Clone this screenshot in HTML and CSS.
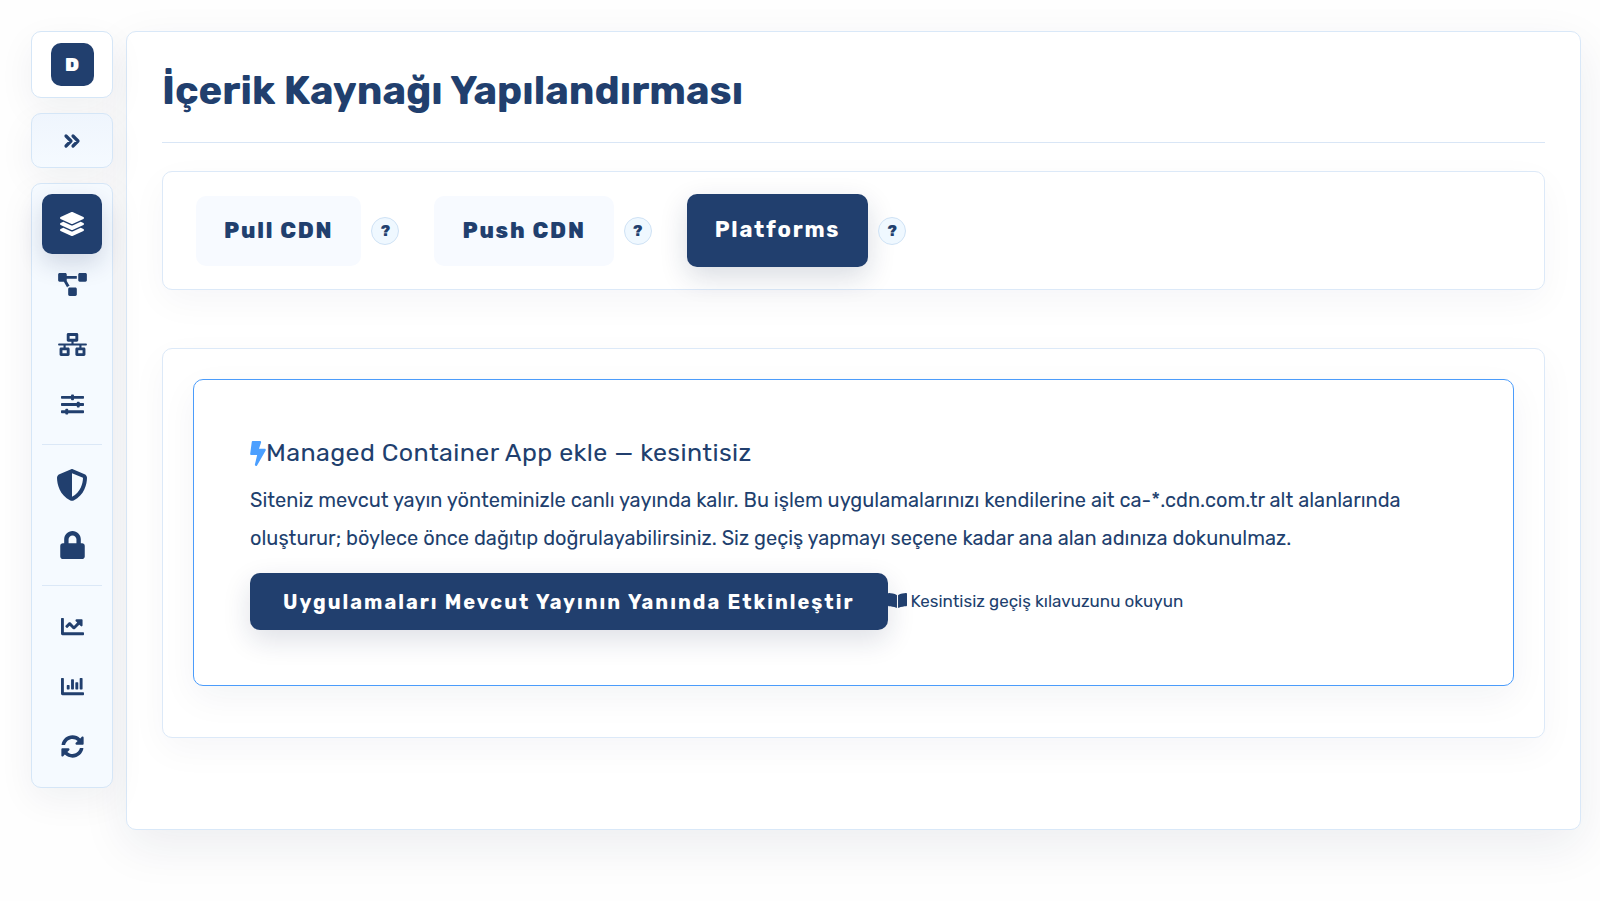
FILE: index.html
```html
<!DOCTYPE html>
<html lang="tr">
<head>
<meta charset="utf-8">
<meta name="viewport" content="width=device-width, initial-scale=1">
<title>İçerik Kaynağı Yapılandırması</title>
<link rel="stylesheet" href="styles.css">
</head>
<body>
<div class="layout">
  <aside class="sidebar">
    <div class="side-card brand"><a class="brand-mark" href="#">D</a></div>
    <button class="side-card expand" type="button" aria-label="Menüyü genişlet">
      <svg width="18" height="16" viewBox="0 0 18 16" aria-hidden="true"><path d="M3 3l5 5-5 5M10 3l5 5-5 5" fill="none" stroke="currentColor" stroke-width="3.2" stroke-linecap="round" stroke-linejoin="round"/></svg>
    </button>
    <nav class="side-card nav" aria-label="Ana menü">
      <a class="nav-item active" href="#" aria-label="Kaynaklar"><svg width="24" height="24" viewBox="0 0 512 512"><path d="M12.41 148.02l232.94 105.67c6.8 3.09 14.49 3.09 21.29 0l232.94-105.67c16.55-7.51 16.55-32.52 0-40.03L266.65 2.31a25.607 25.607 0 0 0-21.29 0L12.41 107.98c-16.55 7.51-16.55 32.53 0 40.04zm487.18 88.28l-58.09-26.33-161.64 73.27c-7.56 3.43-15.59 5.17-23.86 5.17s-16.29-1.74-23.86-5.17L70.51 209.97l-58.1 26.33c-16.55 7.5-16.55 32.5 0 40l232.94 105.59c6.8 3.08 14.49 3.08 21.29 0L499.59 276.3c16.55-7.5 16.55-32.5 0-40zm0 127.8l-57.87-26.23-161.86 73.37c-7.56 3.43-15.59 5.17-23.86 5.17s-16.29-1.74-23.86-5.17L70.29 337.87 12.41 364.1c-16.55 7.5-16.55 32.5 0 40l232.94 105.59c6.8 3.08 14.49 3.08 21.29 0L499.59 404.1c16.55-7.5 16.55-32.5 0-40z"/></svg></a>
      <a class="nav-item" href="#" aria-label="Akış"><svg width="29" height="23" viewBox="0 0 640 512"><path d="M384 320H256c-17.67 0-32 14.33-32 32v128c0 17.67 14.33 32 32 32h128c17.67 0 32-14.33 32-32V352c0-17.67-14.33-32-32-32zM192 32c0-17.67-14.33-32-32-32H32C14.33 0 0 14.33 0 32v128c0 17.67 14.33 32 32 32h95.72l73.16 128.04C211.98 300.98 232.4 288 256 288h.28L192 175.51V128h224V64H192V32zM608 0H480c-17.67 0-32 14.33-32 32v128c0 17.67 14.33 32 32 32h128c17.67 0 32-14.33 32-32V32c0-17.67-14.33-32-32-32z"/></svg></a>
      <a class="nav-item" href="#" aria-label="Ağ"><svg width="29" height="23" viewBox="0 0 640 512"><path d="M640 264v-16c0-8.84-7.16-16-16-16H344v-40h72c17.67 0 32-14.33 32-32V32c0-17.67-14.33-32-32-32H224c-17.67 0-32 14.33-32 32v128c0 17.67 14.33 32 32 32h72v40H16c-8.84 0-16 7.16-16 16v16c0 8.84 7.16 16 16 16h104v40H64c-17.67 0-32 14.33-32 32v128c0 17.67 14.33 32 32 32h160c17.67 0 32-14.33 32-32V352c0-17.67-14.33-32-32-32h-56v-40h304v40h-56c-17.67 0-32 14.33-32 32v128c0 17.67 14.33 32 32 32h160c17.67 0 32-14.33 32-32V352c0-17.67-14.33-32-32-32h-56v-40h104c8.84 0 16-7.16 16-16zM256 128V64h128v64H256zm-64 320H96v-64h96v64zm352 0h-96v-64h96v64z"/></svg></a>
      <a class="nav-item" href="#" aria-label="Ayarlar"><svg width="23" height="23" viewBox="0 0 512 512"><path d="M496 384H160v-16c0-8.8-7.2-16-16-16h-32c-8.8 0-16 7.2-16 16v16H16c-8.8 0-16 7.2-16 16v32c0 8.8 7.2 16 16 16h80v16c0 8.8 7.2 16 16 16h32c8.8 0 16-7.2 16-16v-16h336c8.8 0 16-7.2 16-16v-32c0-8.8-7.2-16-16-16zm0-160h-80v-16c0-8.8-7.2-16-16-16h-32c-8.8 0-16 7.2-16 16v16H16c-8.8 0-16 7.2-16 16v32c0 8.8 7.2 16 16 16h336v16c0 8.8 7.2 16 16 16h32c8.8 0 16-7.2 16-16v-16h80c8.8 0 16-7.2 16-16v-32c0-8.8-7.2-16-16-16zm0-160H288V48c0-8.8-7.2-16-16-16h-32c-8.8 0-16 7.2-16 16v16H16C7.2 64 0 71.2 0 80v32c0 8.8 7.2 16 16 16h208v16c0 8.8 7.2 16 16 16h32c8.8 0 16-7.2 16-16v-16h208c8.8 0 16-7.2 16-16V80c0-8.8-7.2-16-16-16z"/></svg></a>
      <hr class="nav-rule">
      <a class="nav-item" href="#" aria-label="Güvenlik"><svg width="32" height="32" viewBox="0 0 512 512"><path d="M256 0c4.6 0 9.2 1 13.4 2.9L457.7 82.8c22 9.3 38.4 31 38.3 57.2c-.5 99.2-41.3 280.7-213.6 363.2c-16.7 8-36.1 8-52.8 0C57.3 420.7 16.5 239.2 16 140c-.1-26.2 16.3-47.9 38.3-57.2L242.7 2.9C246.8 1 251.4 0 256 0zm0 66.8V444.8C394 378 431.1 230.1 432 141.4L256 66.8z"/></svg></a>
      <a class="nav-item" href="#" aria-label="SSL"><svg width="25" height="28" viewBox="0 0 448 512"><path d="M400 224h-24v-72C376 68.2 307.8 0 224 0S72 68.2 72 152v72H48c-26.5 0-48 21.5-48 48v192c0 26.5 21.5 48 48 48h352c26.5 0 48-21.5 48-48V272c0-26.5-21.5-48-48-48zm-104 0H152v-72c0-39.7 32.3-72 72-72s72 32.3 72 72v72z"/></svg></a>
      <hr class="nav-rule">
      <a class="nav-item" href="#" aria-label="Analiz"><svg width="23" height="23" viewBox="0 0 512 512"><path d="M496 384H64V80c0-8.84-7.16-16-16-16H16C7.16 64 0 71.16 0 80v336c0 17.67 14.33 32 32 32h464c8.84 0 16-7.16 16-16v-32c0-8.84-7.16-16-16-16zM464 96H345.94c-21.38 0-32.09 25.85-16.97 40.97l32.4 32.4L288 242.75l-73.37-73.37c-12.5-12.5-32.76-12.5-45.25 0l-68.69 68.69c-6.25 6.25-6.25 16.38 0 22.63l22.62 22.62c6.25 6.25 16.38 6.25 22.63 0L192 237.25l73.37 73.37c12.5 12.5 32.76 12.5 45.25 0l96-96 32.4 32.4c15.12 15.12 40.97 4.41 40.97-16.97V112c.01-8.84-7.15-16-15.99-16z"/></svg></a>
      <a class="nav-item" href="#" aria-label="Raporlar"><svg width="23" height="23" viewBox="0 0 512 512"><path d="M332.8 320h38.4c6.4 0 12.8-6.4 12.8-12.8V172.8c0-6.4-6.4-12.8-12.8-12.8h-38.4c-6.4 0-12.8 6.4-12.8 12.8v134.4c0 6.4 6.4 12.8 12.8 12.8zm96 0h38.4c6.4 0 12.8-6.4 12.8-12.8V76.8c0-6.4-6.4-12.8-12.8-12.8h-38.4c-6.4 0-12.8 6.4-12.8 12.8v230.4c0 6.4 6.4 12.8 12.8 12.8zm-288 0h38.4c6.4 0 12.8-6.4 12.8-12.8v-70.4c0-6.4-6.4-12.8-12.8-12.8h-38.4c-6.4 0-12.8 6.4-12.8 12.8v70.4c0 6.4 6.4 12.8 12.8 12.8zm96 0h38.4c6.4 0 12.8-6.4 12.8-12.8V108.8c0-6.4-6.4-12.8-12.8-12.8h-38.4c-6.4 0-12.8 6.4-12.8 12.8v198.4c0 6.4 6.4 12.8 12.8 12.8zM496 384H64V80c0-8.84-7.16-16-16-16H16C7.16 64 0 71.16 0 80v336c0 17.67 14.33 32 32 32h464c8.84 0 16-7.16 16-16v-32c0-8.84-7.16-16-16-16z"/></svg></a>
      <a class="nav-item" href="#" aria-label="Yenile"><svg width="23" height="23" viewBox="0 0 512 512"><path d="M370.72 133.28C339.458 104.008 298.888 87.962 255.848 88c-77.458.068-144.328 53.178-162.791 126.85-1.344 5.363-6.122 9.15-11.651 9.15H24.103c-7.498 0-13.194-6.807-11.807-14.176C33.933 94.924 134.813 8 256 8c66.448 0 126.791 26.136 171.315 68.685L463.03 40.97C478.149 25.851 504 36.559 504 57.941V192c0 13.255-10.745 24-24 24H345.941c-21.382 0-32.09-25.851-16.971-40.971l41.75-41.749zM32 296h134.059c21.382 0 32.09 25.851 16.971 40.971l-41.75 41.75c31.262 29.273 71.835 45.319 114.876 45.28 77.418-.07 144.315-53.144 162.787-126.849 1.344-5.363 6.122-9.15 11.651-9.15h57.304c7.498 0 13.194 6.807 11.807 14.176C478.067 417.076 377.187 504 256 504c-66.448 0-126.791-26.136-171.315-68.685L48.97 471.03C33.851 486.149 8 475.441 8 454.059V320c0-13.255 10.745-24 24-24z"/></svg></a>
    </nav>
  </aside>

  <main class="main">
    <h1 class="title">İçerik Kaynağı Yapılandırması</h1>
    <div class="card tabs">
      <div class="tab-group"><button class="tab" type="button">Pull CDN</button><button class="help" type="button">?</button></div>
      <div class="tab-group"><button class="tab" type="button">Push CDN</button><button class="help" type="button">?</button></div>
      <div class="tab-group"><button class="tab tab-active" type="button">Platforms</button><button class="help" type="button">?</button></div>
    </div>
    <section class="card panel">
      <div class="notice">
        <h2 class="notice-title"><svg class="bolt" width="16" height="25" viewBox="0 0 320 512" aria-hidden="true"><path d="M296 160H180.6l42.6-129.8C227.2 15 215.7 0 200 0H56C44 0 33.8 8.9 32.2 20.8l-32 240C-1.7 275.2 9.5 288 24 288h118.7L96.6 482.5c-3.6 15.2 8 29.5 23.3 29.5 8.4 0 16.4-4.4 20.8-12l176-304c9.3-15.9-2.2-36-20.7-36z"/></svg>Managed Container App ekle — kesintisiz</h2>
        <p class="notice-text">Siteniz mevcut yayın yönteminizle canlı yayında kalır. Bu işlem uygulamalarınızı kendilerine ait ca-*.cdn.com.tr alt alanlarında oluşturur; böylece önce dağıtıp doğrulayabilirsiniz. Siz geçiş yapmayı seçene kadar ana alan adınıza dokunulmaz.</p>
        <div class="actions">
          <button class="primary" type="button">Uygulamaları Mevcut Yayının Yanında Etkinleştir</button>
          <a class="guide" href="#"><svg width="19" height="17" viewBox="0 0 576 512" aria-hidden="true"><path d="M542.22 32.05c-54.8 3.11-163.72 14.43-230.96 55.59-4.64 2.84-7.27 7.89-7.27 13.17v363.87c0 11.55 12.63 18.85 23.28 13.49 69.18-34.82 169.23-44.32 218.7-46.92 16.89-.89 30.02-14.43 30.02-30.66V62.75c.01-17.71-15.35-31.74-33.77-30.7zM264.73 87.64C197.5 46.48 88.58 35.17 33.78 32.05 15.36 31.01 0 45.04 0 62.75V400.6c0 16.24 13.13 29.78 30.02 30.66 49.49 2.6 149.59 12.11 218.77 46.95 10.62 5.35 23.21-1.94 23.21-13.46V100.63c0-5.29-2.62-10.14-7.27-12.99z"/></svg>Kesintisiz geçiş kılavuzunu okuyun</a>
        </div>
      </div>
    </section>
  </main>
</div>
</body>
</html>
```
FILE: styles.css
```css
* { box-sizing: border-box; }

body {
  margin: 0;
  background: #fefefe;
  color: #213f6e;
  font-family: Rubik, Inter, "Noto Sans", sans-serif;
}

button { font: inherit; color: inherit; cursor: pointer; }
a { color: inherit; text-decoration: none; }
svg { display: block; flex: none; fill: currentColor; }

.layout {
  display: flex;
  align-items: flex-start;
  gap: 13px;
  min-height: 100vh;
  padding: 31px 19px 31px 31px;
}

.sidebar {
  z-index: 1;
  display: flex;
  flex: none;
  flex-direction: column;
  gap: 15px;
  width: 82px;
}

.side-card {
  display: flex;
  align-items: center;
  justify-content: center;
  border: 1px solid #d5e6f7;
  border-radius: 10px;
  background: #f5faff;
  box-shadow: 0 12px 36px rgba(20, 35, 75, 0.06);
}

.brand { padding: 11px; background: #fff; }

.brand-mark {
  display: grid;
  place-items: center;
  width: 43px;
  height: 43px;
  border-radius: 10px;
  background: #213f6e;
  color: #fff;
  font-size: 19px;
  font-weight: 900;
}

.expand {
  height: 55px;
  padding: 0;
  background: linear-gradient(#eff5fd, #f5faff);
}

.nav { flex-direction: column; padding: 10px 10px 11px; }

.nav-item {
  display: grid;
  place-items: center;
  width: 60px;
  height: 60px;
  border-radius: 10px;
}

.active {
  background: #213f6e;
  color: #fff;
  box-shadow: 0 10px 24px rgba(20, 40, 85, 0.16);
}

.nav-rule {
  width: 100%;
  margin: 10px 0;
  border: 0;
  border-top: 1px solid #dbe8f7;
}

.main {
  flex: 1;
  min-width: 0;
  padding: 35px 35px 91px;
  border: 1px solid #d9e8f8;
  border-radius: 10px;
  background: #fff;
  box-shadow: 0 16px 48px rgba(20, 35, 75, 0.08);
}

.title {
  margin: 0 0 28px;
  padding-bottom: 27px;
  border-bottom: 1px solid #d9e6f6;
  font-size: 40px;
  font-weight: 700;
  line-height: 48px;
}

.card {
  border: 1px solid #dce9f8;
  border-radius: 10px;
  background: #fff;
  box-shadow: 0 12px 36px rgba(20, 35, 75, 0.04);
}

.tabs {
  display: flex;
  flex-wrap: wrap;
  align-items: center;
  gap: 35px;
  padding: 22px 33px;
}

.tab-group { display: flex; align-items: center; gap: 10px; }

.tab {
  padding: 20px 28px;
  border: 0;
  border-radius: 10px;
  background: #f7faff;
  font-size: 22px;
  font-weight: 800;
  line-height: 30px;
  letter-spacing: 0.08em;
}

.tab-active {
  padding: 21px 28px 22px;
  background: #213f6e;
  color: #fff;
  font-weight: 700;
  box-shadow: 0 10px 28px rgba(20, 35, 75, 0.16);
}

.help {
  width: 28px;
  height: 28px;
  padding: 0;
  border: 1px solid #cfe2f5;
  border-radius: 50%;
  background: #eff8ff;
  font-size: 15px;
  font-weight: 800;
  line-height: 24px;
}

.panel { margin-top: 58px; padding: 30px 30px 51px; }

.notice {
  padding: 54px 55px 55px 56px;
  border: 1px solid #4b9cfb;
  border-radius: 10px;
  background: #fff;
  box-shadow: 0 12px 36px rgba(20, 35, 75, 0.05);
}

.notice-title {
  display: flex;
  align-items: center;
  margin: 0 0 9px;
  font-size: 25px;
  font-weight: 400;
  line-height: 38px;
  letter-spacing: 0.016em;
}

.bolt { color: #4b9fff; }

.notice-text { margin: 0 0 16px; font-size: 20px; line-height: 38px; }

.actions { display: flex; flex-wrap: wrap; align-items: center; }

.primary {
  padding: 14px 33px 13px;
  border: 0;
  border-radius: 10px;
  background: #213f6e;
  color: #fff;
  font-size: 20px;
  font-weight: 700;
  line-height: 30px;
  letter-spacing: 2px;
  box-shadow: 0 10px 28px rgba(20, 35, 75, 0.14);
}

.guide {
  display: flex;
  align-items: center;
  gap: 4px;
  padding-bottom: 2px;
  font-size: 17px;
  line-height: 24px;
}
```
